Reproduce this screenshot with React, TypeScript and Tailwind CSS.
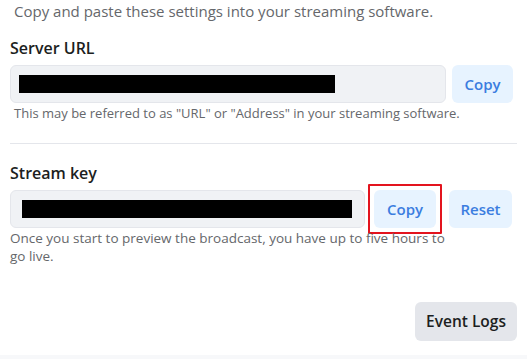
const font = { fontFamily: '"Open Sans", "Noto Sans", sans-serif' }

function SecretBox({ width, barWidth, barOffset }: { width: string; barWidth: string; barOffset: string }) {
  return (
    <div className={`${width} flex h-[38px] items-center rounded-md border border-[#e4e6eb] bg-[#f0f2f5]`}>
      <div className={`${barOffset} ${barWidth} h-[18px] bg-black`} />
    </div>
  )
}

function SoftButton({ label, width }: { label: string; width: string }) {
  return (
    <button className={`${width} flex h-[38px] items-center justify-center rounded-md bg-[#e7f3ff] text-[15px] font-semibold text-[#3b7de0]`}>
      {label}
    </button>
  )
}

export default function App() {
  return (
    <div style={font} className="flex h-[359px] w-[527px] flex-col overflow-hidden bg-white">
      <div className="flex flex-1 flex-col px-[10px]">
        <p className="-mt-[1px] pl-1 text-[15px] leading-[24px] text-[#65676b]">
          Copy and paste these settings into your streaming software.
        </p>

        <h3 className="mt-[14px] text-[16px] font-semibold leading-[22px] text-[#1c1e21]">Server URL</h3>
        <div className="mt-[6px] flex items-center gap-[6px]">
          <SecretBox width="w-[436px]" barWidth="w-[316px]" barOffset="ml-[8px]" />
          <SoftButton label="Copy" width="w-[61px]" />
        </div>
        <p className="mt-[1px] pl-1 text-[13px] leading-[18px] text-[#65676b]">
          This may be referred to as "URL" or "Address" in your streaming software.
        </p>

        <div className="mt-[21px] h-px bg-[#e4e6eb]" />

        <h3 className="mt-[18px] text-[16px] font-semibold leading-[22px] text-[#1c1e21]">Stream key</h3>
        <div className="mt-[6px] flex items-center">
          <SecretBox width="w-[355px]" barWidth="w-[330px]" barOffset="ml-[11px]" />
          {/* highlight around the key's copy button */}
          <div className="-my-[6px] ml-[3px] rounded-[1px] border-2 border-[#e3141e] p-[4px]">
            <SoftButton label="Copy" width="w-[62px]" />
          </div>
          <div className="ml-[7px]">
            <SoftButton label="Reset" width="w-[63px]" />
          </div>
        </div>
        <p className="mt-[1px] max-w-[442px] text-[13.5px] leading-[18px] text-[#65676b]">
          Once you start to preview the broadcast, you have up to five hours to go live.
        </p>

        <div className="mt-auto mb-[14px] flex justify-end">
          <button className="h-[39px] w-[102px] rounded-md bg-[#e4e6eb] text-[15.5px] font-semibold text-[#1c1e21]">
            Event Logs
          </button>
        </div>
      </div>
      <div className="h-[4px] bg-[#f7f8fa]" />
    </div>
  )
}
